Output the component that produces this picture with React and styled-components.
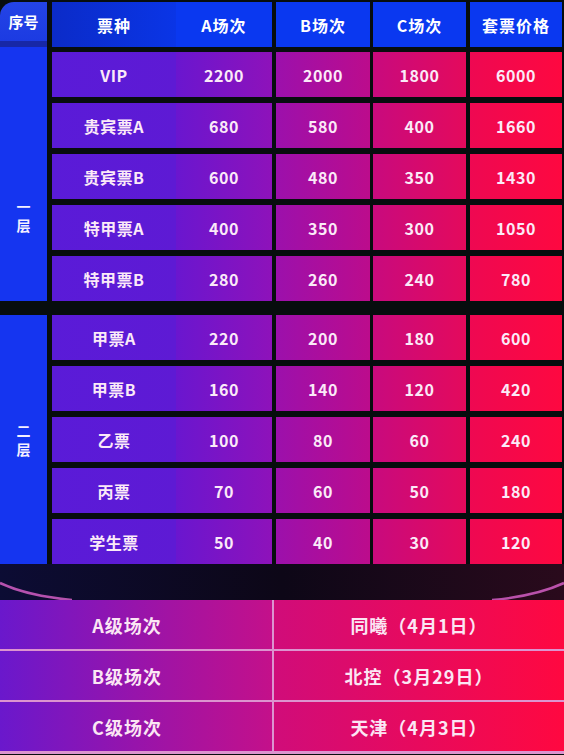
import styled, { createGlobalStyle } from "styled-components"

const GlobalStyle = createGlobalStyle`
  html, body {
    margin: 0;
    padding: 0;
    background: #070d0e;
  }
  body {
    font-family: "Noto Sans CJK SC", "Noto Sans", sans-serif;
  }
`

const Page = styled.div`
  width: 564px;
  height: 755px;
  overflow: hidden;
  background: #070d0e;
  display: flex;
  flex-direction: column;
`

const Board = styled.div`
  display: flex;
  gap: 5px;
  padding-top: 2px;
  padding-right: 2px;
`

const Side = styled.div`
  width: 47px;
  display: flex;
  flex-direction: column;
`

const SideHead = styled.div`
  height: 39px;
  border-top-left-radius: 14px;
  background: linear-gradient(180deg, #2444e6, #1c3be2);
  border-bottom: 6px solid #1727a6;
  display: flex;
  align-items: center;
  justify-content: center;
  color: #fff;
  font-size: 15px;
  font-weight: 700;
`

const SideGroup = styled.div`
  height: ${({ $h }) => $h}px;
  margin-top: ${({ $mt }) => $mt || 0}px;
  background: #1535f0;
  display: flex;
  flex-direction: column;
  align-items: center;
  justify-content: center;
  padding-top: ${({ $pt }) => $pt || 0}px;
  box-sizing: border-box;
  color: #f4f0ff;
  font-size: 14px;
  font-weight: 700;
  line-height: 19px;
`

const Grid = styled.div`
  flex: 1;
  display: flex;
  flex-direction: column;
`

const Row = styled.div`
  display: flex;
  height: 45px;
  margin-top: ${({ $mt }) => $mt}px;
`

const Cell = styled.div`
  width: ${({ $w }) => $w}px;
  margin-left: ${({ $ml }) => $ml}px;
  background: linear-gradient(90deg, ${({ $from }) => $from}, ${({ $to }) => $to});
  display: flex;
  align-items: center;
  justify-content: center;
  color: #fbeaf8;
  font-size: 16px;
  font-weight: 700;
  letter-spacing: 0.5px;
`

const HeadCell = styled(Cell)`
  color: #ffffff;
  letter-spacing: 1px;
`

const Stage = styled.div`
  height: 36px;
  background: linear-gradient(90deg, #0c0c34, #0d0717 50%, #2a0a1c);
  svg {
    display: block;
  }
`

const Venues = styled.div`
  display: flex;
  flex-direction: column;
  gap: 2px;
  background: #dc94cf;
  padding-bottom: 3px;
`

const VenueRow = styled.div`
  display: flex;
  height: 49px;
  gap: 2px;
`

const VenueCell = styled.div`
  width: ${({ $w }) => $w}px;
  background: linear-gradient(90deg, ${({ $from }) => $from}, ${({ $to }) => $to});
  display: flex;
  align-items: center;
  justify-content: center;
  color: #fbe6f4;
  font-size: 18px;
  font-weight: 700;
  letter-spacing: 1px;
  padding-right: ${({ $pr }) => $pr || 0}px;
  box-sizing: border-box;
`

const cols = [
  { w: 124, ml: 0, from: "#5a1bd8", to: "#5e1ad4", head: ["#0b2bc8", "#0a35e6"] },
  { w: 96, ml: 0, from: "#6a16cf", to: "#8e12ba", head: ["#0a38f0", "#0a38f0"] },
  { w: 94, ml: 4, from: "#9c10ac", to: "#bc0c8c", head: ["#0a38f0", "#0a38f0"] },
  { w: 93, ml: 3, from: "#c80a7e", to: "#e40a5c", head: ["#0a38f0", "#0a38f0"] },
  { w: 92, ml: 4, from: "#ee0852", to: "#fe0840", head: ["#0a38f0", "#0a38f0"] },
]

const headers = ["票种", "A场次", "B场次", "C场次", "套票价格"]

const floor1 = [
  ["VIP", "2200", "2000", "1800", "6000"],
  ["贵宾票A", "680", "580", "400", "1660"],
  ["贵宾票B", "600", "480", "350", "1430"],
  ["特甲票A", "400", "350", "300", "1050"],
  ["特甲票B", "280", "260", "240", "780"],
]

const floor2 = [
  ["甲票A", "220", "200", "180", "600"],
  ["甲票B", "160", "140", "120", "420"],
  ["乙票", "100", "80", "60", "240"],
  ["丙票", "70", "60", "50", "180"],
  ["学生票", "50", "40", "30", "120"],
]

const venues = [
  ["A级场次", "同曦（4月1日）"],
  ["B级场次", "北控（3月29日）"],
  ["C级场次", "天津（4月3日）"],
]

const TicketRow = ({ cells, mt }) => (
  <Row $mt={mt}>
    {cells.map((text, i) => (
      <Cell key={i} $w={cols[i].w} $ml={cols[i].ml} $from={cols[i].from} $to={cols[i].to}>
        {text}
      </Cell>
    ))}
  </Row>
)

const App = () => {
  return (
    <Page>
      <GlobalStyle />
      <Board>
        <Side>
          <SideHead>序号</SideHead>
          <SideGroup $h={254} $pt={84}>
            <span>一</span>
            <span>层</span>
          </SideGroup>
          <SideGroup $h={249} $mt={14}>
            <span>二</span>
            <span>层</span>
          </SideGroup>
        </Side>
        <Grid>
          <Row $mt={0}>
            {headers.map((h, i) => (
              <HeadCell key={h} $w={cols[i].w} $ml={cols[i].ml} $from={cols[i].head[0]} $to={cols[i].head[1]}>
                {h}
              </HeadCell>
            ))}
          </Row>
          {floor1.map((r, i) => (
            <TicketRow key={r[0]} cells={r} mt={i === 0 ? 5 : 6} />
          ))}
          {floor2.map((r, i) => (
            <TicketRow key={r[0]} cells={r} mt={i === 0 ? 14 : 6} />
          ))}
        </Grid>
      </Board>
      <Stage>
        <svg width="564" height="36" viewBox="0 0 564 36">
          <path d="M0 19 Q 28 32 72 36" stroke="#d35ec4" strokeWidth="2.5" fill="none" opacity="0.85" />
          <path d="M492 36 Q 536 32 564 19" stroke="#d35ec4" strokeWidth="2.5" fill="none" opacity="0.85" />
        </svg>
      </Stage>
      <Venues>
        {venues.map(([a, b]) => (
          <VenueRow key={a}>
            <VenueCell $w={272} $from="#6a18cc" $to="#c4108a" $pr={18}>{a}</VenueCell>
            <VenueCell $w={290} $from="#d00c7a" $to="#ff0840">{b}</VenueCell>
          </VenueRow>
        ))}
      </Venues>
    </Page>
  )
}

export default App
